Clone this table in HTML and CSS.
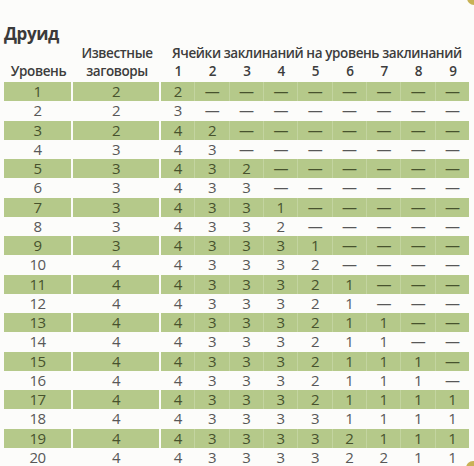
FILE: index.html
```html
<!DOCTYPE html>
<html lang="ru">
<head>
<meta charset="utf-8">
<link rel="stylesheet" href="styles.css">
</head>
<body>
<div class="page">
  <h1 class="title">Друид</h1>
  <table class="spells">
    <thead>
      <tr class="head1">
        <th class="lvl"></th>
        <th class="known">Известные</th>
        <th class="slots-title" colspan="9">Ячейки заклинаний на уровень заклинаний</th>
      </tr>
      <tr class="head2">
        <th class="lvl">Уровень</th>
        <th class="known">заговоры</th>
        <th>1</th><th>2</th><th>3</th><th>4</th><th>5</th><th>6</th><th>7</th><th>8</th><th>9</th>
      </tr>
    </thead>
    <tbody>
      <tr class="g"><td>1</td><td>2</td><td>2</td><td>—</td><td>—</td><td>—</td><td>—</td><td>—</td><td>—</td><td>—</td><td>—</td></tr>
      <tr><td>2</td><td>2</td><td>3</td><td>—</td><td>—</td><td>—</td><td>—</td><td>—</td><td>—</td><td>—</td><td>—</td></tr>
      <tr class="g"><td>3</td><td>2</td><td>4</td><td>2</td><td>—</td><td>—</td><td>—</td><td>—</td><td>—</td><td>—</td><td>—</td></tr>
      <tr><td>4</td><td>3</td><td>4</td><td>3</td><td>—</td><td>—</td><td>—</td><td>—</td><td>—</td><td>—</td><td>—</td></tr>
      <tr class="g"><td>5</td><td>3</td><td>4</td><td>3</td><td>2</td><td>—</td><td>—</td><td>—</td><td>—</td><td>—</td><td>—</td></tr>
      <tr><td>6</td><td>3</td><td>4</td><td>3</td><td>3</td><td>—</td><td>—</td><td>—</td><td>—</td><td>—</td><td>—</td></tr>
      <tr class="g"><td>7</td><td>3</td><td>4</td><td>3</td><td>3</td><td>1</td><td>—</td><td>—</td><td>—</td><td>—</td><td>—</td></tr>
      <tr><td>8</td><td>3</td><td>4</td><td>3</td><td>3</td><td>2</td><td>—</td><td>—</td><td>—</td><td>—</td><td>—</td></tr>
      <tr class="g"><td>9</td><td>3</td><td>4</td><td>3</td><td>3</td><td>3</td><td>1</td><td>—</td><td>—</td><td>—</td><td>—</td></tr>
      <tr><td>10</td><td>4</td><td>4</td><td>3</td><td>3</td><td>3</td><td>2</td><td>—</td><td>—</td><td>—</td><td>—</td></tr>
      <tr class="g"><td>11</td><td>4</td><td>4</td><td>3</td><td>3</td><td>3</td><td>2</td><td>1</td><td>—</td><td>—</td><td>—</td></tr>
      <tr><td>12</td><td>4</td><td>4</td><td>3</td><td>3</td><td>3</td><td>2</td><td>1</td><td>—</td><td>—</td><td>—</td></tr>
      <tr class="g"><td>13</td><td>4</td><td>4</td><td>3</td><td>3</td><td>3</td><td>2</td><td>1</td><td>1</td><td>—</td><td>—</td></tr>
      <tr><td>14</td><td>4</td><td>4</td><td>3</td><td>3</td><td>3</td><td>2</td><td>1</td><td>1</td><td>—</td><td>—</td></tr>
      <tr class="g"><td>15</td><td>4</td><td>4</td><td>3</td><td>3</td><td>3</td><td>2</td><td>1</td><td>1</td><td>1</td><td>—</td></tr>
      <tr><td>16</td><td>4</td><td>4</td><td>3</td><td>3</td><td>3</td><td>2</td><td>1</td><td>1</td><td>1</td><td>—</td></tr>
      <tr class="g"><td>17</td><td>4</td><td>4</td><td>3</td><td>3</td><td>3</td><td>2</td><td>1</td><td>1</td><td>1</td><td>1</td></tr>
      <tr><td>18</td><td>4</td><td>4</td><td>3</td><td>3</td><td>3</td><td>3</td><td>1</td><td>1</td><td>1</td><td>1</td></tr>
      <tr class="g"><td>19</td><td>4</td><td>4</td><td>3</td><td>3</td><td>3</td><td>3</td><td>2</td><td>1</td><td>1</td><td>1</td></tr>
      <tr><td>20</td><td>4</td><td>4</td><td>3</td><td>3</td><td>3</td><td>3</td><td>2</td><td>2</td><td>1</td><td>1</td></tr>
    </tbody>
  </table>
  <span class="corner corner-tr"></span>
  <span class="corner corner-br"></span>
</div>
</body>
</html>
```

FILE: styles.css
```css
html, body {
  margin: 0;
  padding: 0;
  background: #fcfcfa;
}
.page {
  position: relative;
  width: 474px;
  height: 466px;
  overflow: hidden;
  padding: 24px 0 0 4px;
  box-sizing: border-box;
  font-family: "Open Sans", "Noto Sans", sans-serif;
  color: #555;
}
.title {
  margin: 0;
  font-size: 17px;
  line-height: 20px;
  font-weight: 700;
  color: #3a3a3a;
  letter-spacing: -0.4px;
}
.spells {
  border-collapse: separate;
  border-spacing: 0;
  table-layout: fixed;
  width: 466px;
  font-size: 15px;
}
.spells th, .spells td {
  padding: 0;
  text-align: center;
}
.spells thead th {
  font-size: 13.5px;
  font-weight: 600;
  color: #3d3d3d;
  letter-spacing: -0.4px;
  white-space: nowrap;
}
.head1 th {
  height: 18px;
  line-height: 18px;
  vertical-align: bottom;
}
.head2 th {
  height: 20px;
  line-height: 18px;
  vertical-align: top;
}
.spells th.slots-title {
  text-align: left;
  padding-left: 11px;
}
.spells th.lvl {
  width: 69px;
}
.spells th.known {
  width: 88px;
}
.spells tbody td {
  height: 19.25px;
  line-height: 19px;
  color: #585858;
  letter-spacing: -0.5px;
  border-right: 1px solid transparent;
  box-sizing: border-box;
}
.spells tbody td:first-child,
.spells tbody td:nth-child(2) {
  border-right-width: 2px;
}
.spells tbody tr.g td {
  background: #b5c98a;
  color: #47522d;
  border-right-color: #c3d4a0;
  background-clip: padding-box;
}
.spells tbody tr.g td:first-child,
.spells tbody tr.g td:nth-child(2) {
  border-right-color: #fcfcfa;
}
.spells tbody tr.g td:last-child {
  border-right-color: transparent;
}
.corner {
  position: absolute;
  width: 14px;
  height: 14px;
  border-radius: 50%;
  background: #c8b256;
}
.corner-tr {
  top: -9px;
  right: -7px;
}
.corner-br {
  bottom: -9px;
  right: -6px;
}
```
